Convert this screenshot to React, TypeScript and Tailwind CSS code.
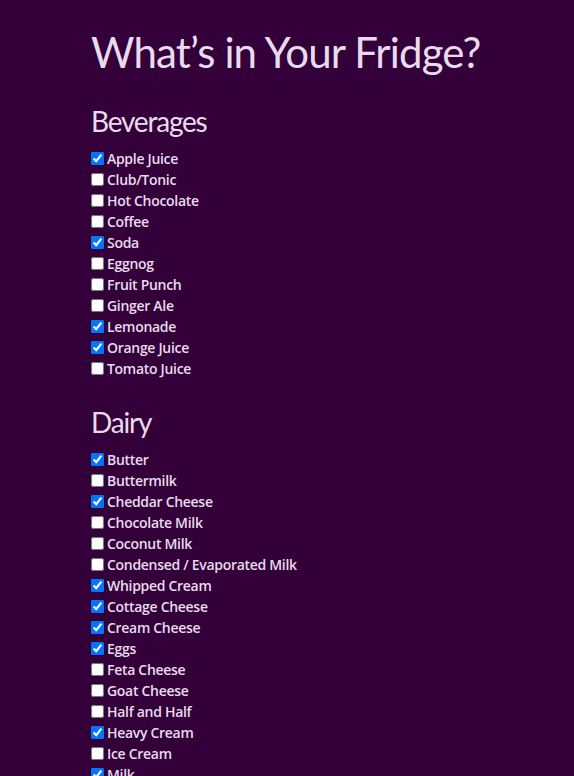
import React from "react";

const beverages: [string, boolean][] = [
  ["Apple Juice", true],
  ["Club/Tonic", false],
  ["Hot Chocolate", false],
  ["Coffee", false],
  ["Soda", true],
  ["Eggnog", false],
  ["Fruit Punch", false],
  ["Ginger Ale", false],
  ["Lemonade", true],
  ["Orange Juice", true],
  ["Tomato Juice", false],
];

const dairy: [string, boolean][] = [
  ["Butter", true],
  ["Buttermilk", false],
  ["Cheddar Cheese", true],
  ["Chocolate Milk", false],
  ["Coconut Milk", false],
  ["Condensed / Evaporated Milk", false],
  ["Whipped Cream", true],
  ["Cottage Cheese", true],
  ["Cream Cheese", true],
  ["Eggs", true],
  ["Feta Cheese", false],
  ["Goat Cheese", false],
  ["Half and Half", false],
  ["Heavy Cream", true],
  ["Ice Cream", false],
  ["Milk", true],
  ["Sour Cream", false],
  ["Yogurt", false],
];

function Section({ title, items }: { title: string; items: [string, boolean][] }) {
  return (
    <section className="mb-[25px]">
      <h2
        className="text-[28px] leading-[36px] font-normal mb-[9px] tracking-[-1.2px]"
        style={{ fontFamily: 'Lato, "Open Sans", sans-serif' }}
      >
        {title}
      </h2>
      <ul className="flex flex-col">
        {items.map(([name, checked]) => (
          <li key={name} className="flex items-center h-[21px]">
            <label className="flex items-center text-[14px] font-semibold leading-[21px] tracking-[-0.3px]">
              <input type="checkbox" defaultChecked={checked} className="m-0 mr-[3px] w-[13px] h-[13px]" />
              {name}
            </label>
          </li>
        ))}
      </ul>
    </section>
  );
}

export default function App() {
  return (
    <div
      className="min-h-[776px] bg-[#33003a] text-[#e8dcec] pl-[91px] pt-[26px]"
      style={{ fontFamily: '"Open Sans", "Noto Sans", sans-serif' }}
    >
      <h1
        className="text-[42px] leading-[52px] font-normal mb-[25px] tracking-[-0.85px]"
        style={{ fontFamily: 'Lato, "Open Sans", sans-serif' }}
      >
        What’s in Your Fridge?
      </h1>
      <Section title="Beverages" items={beverages} />
      <Section title="Dairy" items={dairy} />
    </div>
  );
}
